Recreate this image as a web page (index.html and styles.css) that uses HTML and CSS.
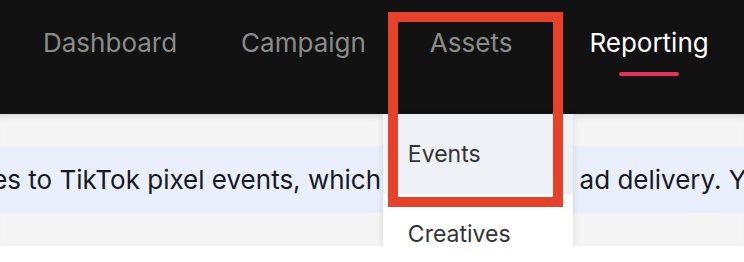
FILE: index.html
```html
<!DOCTYPE html>
<html>
<head>
  <meta charset="UTF-8">
  <title>TikTok Ads – Assets</title>
  <link rel="stylesheet" href="styles.css">
</head>
<body>

<nav class="topbar">
  <a class="nav-item">Dashboard</a>
  <a class="nav-item">Campaign</a>
  <div class="nav-item has-menu">
    Assets
    <div class="menu">
      <div class="menu-item active">Events</div>
      <div class="menu-item">Creatives</div>
    </div>
    <div class="highlight-box"></div>
  </div>
  <a class="nav-item current">Reporting</a>
</nav>

<main class="content">
  <div class="notice">
    <span class="notice-text">Map your event types to TikTok pixel events, which can boost your ad delivery. You can edit them anytime.</span>
  </div>
</main>

</body>
</html>
```

FILE: styles.css
```css
body {
  margin: 0;
  padding: 0;
  font-family: Inter, "Noto Sans", sans-serif;
  background: #fff;
  overflow: hidden;
}

.topbar {
  background: #121212;
  height: 114px;
  display: flex;
  padding-left: 43px;
  gap: 64px;
  box-sizing: border-box;
}

.nav-item {
  position: relative;
  color: #8b8b8b;
  font-size: 26px;
  line-height: 32px;
  padding-top: 27px;
}

.nav-item.current {
  color: #fff;
  margin-left: 13px;
}

.nav-item.current::after {
  content: "";
  position: absolute;
  left: 50%;
  top: 72px;
  width: 60px;
  height: 4px;
  margin-left: -30px;
  border-radius: 2px;
  background: #e6325c;
}

.menu {
  position: absolute;
  top: 114px;
  left: -47px;
  width: 190px;
  background: #fff;
  box-shadow: 0 2px 8px rgba(0, 0, 0, 0.12);
  z-index: 2;
}

.menu-item {
  height: 80px;
  padding-left: 25px;
  display: flex;
  align-items: center;
  font-size: 23px;
  color: #333;
}

.menu-item.active {
  background: #eef1f5;
}

.highlight-box {
  position: absolute;
  top: 12px;
  left: -42px;
  width: 155px;
  height: 175px;
  border: 10px solid #e8412a;
  z-index: 3;
}

.content {
  background: #f5f5f5;
  height: 132px;
  padding-top: 32px;
  box-sizing: border-box;
  box-shadow: inset 0 6px 6px -4px rgba(0, 0, 0, 0.12);
}

.notice {
  background: #e9effc;
  height: 67px;
  display: flex;
  align-items: center;
  overflow: hidden;
  white-space: nowrap;
}

.notice-text {
  font-size: 26px;
  color: #161823;
  text-indent: -246px;
  display: block;
}
```
